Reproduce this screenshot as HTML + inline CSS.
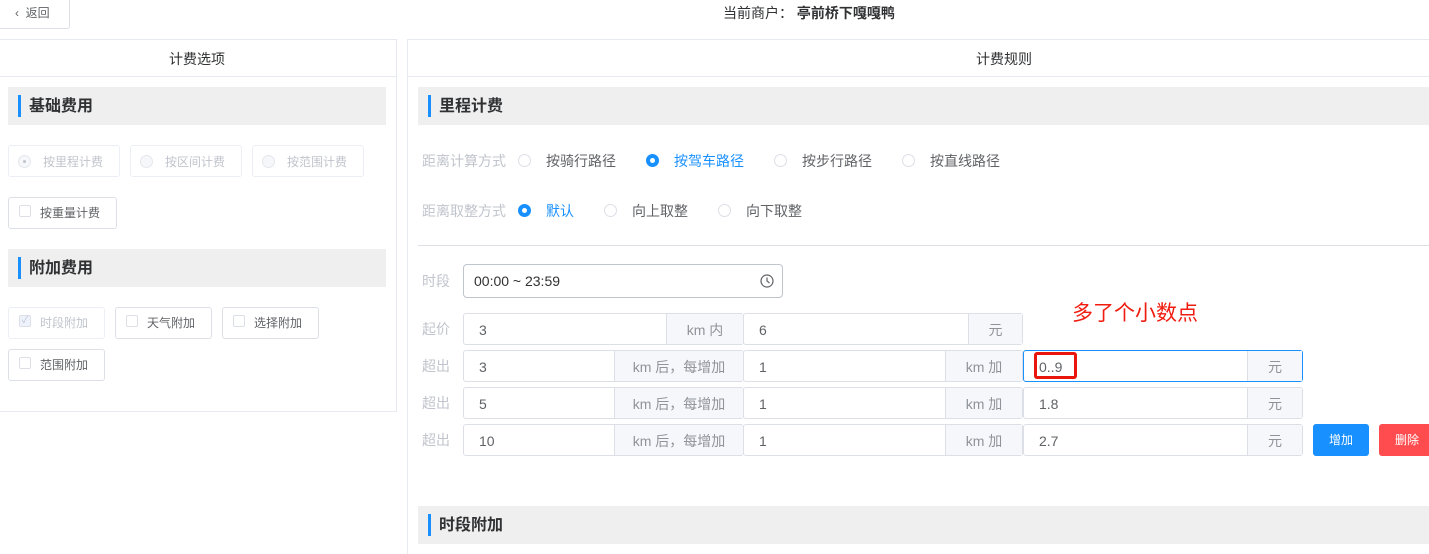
<!DOCTYPE html>
<html><head><meta charset="utf-8"><style>
*{box-sizing:border-box;margin:0;padding:0}
html,body{width:1429px;height:554px;overflow:hidden}
body{background:#fff;font-family:"Liberation Sans","Noto Sans CJK SC",sans-serif;font-size:14px;color:#606266;position:relative}
.a{position:absolute}
.bx{position:absolute;border:1px solid #dcdfe6;border-radius:3px;background:#fff}
.sec{position:absolute;background:#efefef}
.sec i{position:absolute;left:10px;top:8px;width:3px;height:22px;background:#1890ff}
.sec b{position:absolute;left:21px;top:8px;font-size:16px;color:#303133;line-height:22px}
.rad{position:absolute;width:13px;height:13px;border:1px solid #dcdfe6;border-radius:50%;background:#fff}
.rad.on{background:#1890ff;border-color:#1890ff}
.rad.on:after{content:"";position:absolute;left:3px;top:3px;width:5px;height:5px;border-radius:50%;background:#fff}
.chk{position:absolute;width:12px;height:12px;border:1px solid #dcdfe6;border-radius:2px;background:#fff}
.t{position:absolute;white-space:nowrap;line-height:16px}
.s{font-size:12px}
.g{position:absolute;border:1px solid #dcdfe6;border-radius:3px;background:#fff;height:32px}
.g span{position:absolute;left:15px;top:8px;line-height:16px;color:#606266}
.g em{position:absolute;top:0;bottom:0;right:0;background:#f5f7fa;border-left:1px solid #dcdfe6;font-style:normal;color:#909399;text-align:center;line-height:32px}
.lb{position:absolute;left:422px;color:#c0c4cc;line-height:16px}
</style></head><body>
<div class="bx" style="left:-1px;top:-1px;width:71px;height:30px;border-radius:0 0 3px 0"></div>
<div class="t s" style="left:15px;top:5px;color:#606266">‹&nbsp; 返回</div>
<div class="t" style="left:723px;top:5px;color:#303133">当前商户： <b>亭前桥下嘎嘎鸭</b></div>

<div class="a" style="left:-1px;top:39px;width:398px;height:373px;border:1px solid #e6e9ef"></div>
<div class="a" style="left:0;top:76px;width:396px;height:1px;background:#e6e9ef"></div>
<div class="t" style="left:169px;top:51px;color:#303133">计费选项</div>
<div class="sec" style="left:8px;top:87px;width:378px;height:38px"><i></i><b style="top:9px">基础费用</b></div>
<div class="bx" style="left:8px;top:145px;width:112px;height:32px;border-color:#ebeef5"></div><div class="rad" style="left:18px;top:155px;background:#f5f7fa;border-color:#e4e7ed"></div><div class="a" style="left:23px;top:160px;width:3px;height:3px;border-radius:50%;background:#c0c4cc"></div><div class="t s" style="left:43px;top:154px;color:#c0c4cc">按里程计费</div>
<div class="bx" style="left:130px;top:145px;width:112px;height:32px;border-color:#ebeef5"></div><div class="rad" style="left:140px;top:155px;background:#f5f7fa;border-color:#e4e7ed"></div><div class="t s" style="left:165px;top:154px;color:#c0c4cc">按区间计费</div>
<div class="bx" style="left:252px;top:145px;width:112px;height:32px;border-color:#ebeef5"></div><div class="rad" style="left:262px;top:155px;background:#f5f7fa;border-color:#e4e7ed"></div><div class="t s" style="left:287px;top:154px;color:#c0c4cc">按范围计费</div>
<div class="bx" style="left:8px;top:197px;width:109px;height:32px"></div><div class="chk" style="left:19px;top:205px"></div><div class="t s" style="left:40px;top:205px">按重量计费</div>
<div class="sec" style="left:8px;top:249px;width:378px;height:38px"><i></i><b style="top:9px">附加费用</b></div>
<div class="bx" style="left:8px;top:307px;width:97px;height:32px;border-color:#ebeef5"></div><div class="chk" style="left:19px;top:315px;background:#edf2fc;color:#c0c4cc;font-size:10px;line-height:10px;text-align:center">✓</div><div class="t s" style="left:40px;top:315px;color:#c0c4cc">时段附加</div>
<div class="bx" style="left:115px;top:307px;width:97px;height:32px"></div><div class="chk" style="left:126px;top:315px"></div><div class="t s" style="left:147px;top:315px">天气附加</div>
<div class="bx" style="left:222px;top:307px;width:97px;height:32px"></div><div class="chk" style="left:233px;top:315px"></div><div class="t s" style="left:254px;top:315px">选择附加</div>
<div class="bx" style="left:8px;top:349px;width:97px;height:32px"></div><div class="chk" style="left:19px;top:357px"></div><div class="t s" style="left:40px;top:357px">范围附加</div>

<div class="a" style="left:407px;top:39px;width:1030px;height:530px;border:1px solid #e6e9ef"></div>
<div class="a" style="left:408px;top:76px;width:1021px;height:1px;background:#e6e9ef"></div>
<div class="t" style="left:976px;top:51px;color:#303133">计费规则</div>
<div class="sec" style="left:418px;top:87px;width:1011px;height:38px"><i></i><b style="top:9px">里程计费</b></div>
<div class="lb" style="top:153px">距离计算方式</div>
<div class="rad" style="left:518px;top:154px"></div><div class="t" style="left:546px;top:153px">按骑行路径</div>
<div class="rad on" style="left:646px;top:154px"></div><div class="t" style="left:674px;top:153px;color:#1890ff">按驾车路径</div>
<div class="rad" style="left:774px;top:154px"></div><div class="t" style="left:802px;top:153px">按步行路径</div>
<div class="rad" style="left:902px;top:154px"></div><div class="t" style="left:930px;top:153px">按直线路径</div>
<div class="lb" style="top:203px">距离取整方式</div>
<div class="rad on" style="left:518px;top:204px"></div><div class="t" style="left:546px;top:203px;color:#1890ff">默认</div>
<div class="rad" style="left:604px;top:204px"></div><div class="t" style="left:632px;top:203px">向上取整</div>
<div class="rad" style="left:718px;top:204px"></div><div class="t" style="left:746px;top:203px">向下取整</div>
<div class="a" style="left:418px;top:245px;width:1011px;height:1px;background:#dcdfe6"></div>

<div class="lb" style="top:273px">时段</div>
<div class="g" style="left:463px;top:264px;width:320px;height:34px;border-color:#c0c4cc;border-radius:4px"><span style="left:10px;top:8px;color:#303133">00:00 ~ 23:59</span>
<svg class="a" style="left:296px;top:9px" width="14" height="14" viewBox="0 0 14 14"><circle cx="7" cy="7" r="6" fill="none" stroke="#606266" stroke-width="1.2"/><path d="M7 3.5V7l2.5 2" fill="none" stroke="#606266" stroke-width="1.2"/></svg></div>

<div class="lb" style="top:321px">起价</div>
<div class="g" style="left:463px;top:313px;width:281px"><span>3</span><em style="width:77px">km 内</em></div>
<div class="g" style="left:743px;top:313px;width:280px"><span>6</span><em style="width:54px">元</em></div>

<div class="lb" style="top:358px">超出</div>
<div class="g" style="left:463px;top:350px;width:281px"><span>3</span><em style="width:129px">km 后，每增加</em></div>
<div class="g" style="left:743px;top:350px;width:280px"><span>1</span><em style="width:77px">km 加</em></div>
<div class="g" style="left:1023px;top:350px;width:280px;border-color:#1890ff"><span>0..9</span><em style="width:55px">元</em></div>
<div class="a" style="left:1034px;top:352px;width:43px;height:27px;border:3px solid #e8160c;border-radius:3px"></div>

<div class="lb" style="top:395px">超出</div>
<div class="g" style="left:463px;top:387px;width:281px"><span>5</span><em style="width:129px">km 后，每增加</em></div>
<div class="g" style="left:743px;top:387px;width:280px"><span>1</span><em style="width:77px">km 加</em></div>
<div class="g" style="left:1023px;top:387px;width:280px"><span>1.8</span><em style="width:55px">元</em></div>

<div class="lb" style="top:432px">超出</div>
<div class="g" style="left:463px;top:424px;width:281px"><span>10</span><em style="width:129px">km 后，每增加</em></div>
<div class="g" style="left:743px;top:424px;width:280px"><span>1</span><em style="width:77px">km 加</em></div>
<div class="g" style="left:1023px;top:424px;width:280px"><span>2.7</span><em style="width:55px">元</em></div>
<div class="a s" style="left:1313px;top:424px;width:56px;height:32px;background:#1890ff;border-radius:3px;color:#fff;text-align:center;line-height:32px">增加</div>
<div class="a s" style="left:1379px;top:424px;width:56px;height:32px;background:#ff4d4f;border-radius:3px;color:#fff;text-align:center;line-height:32px">删除</div>

<div class="t" style="left:1072px;top:302px;font-size:21px;line-height:24px;color:#f01c10">多了个小数点</div>
<div class="sec" style="left:418px;top:506px;width:1011px;height:38px"><i></i><b style="top:9px">时段附加</b></div>
</body></html>
